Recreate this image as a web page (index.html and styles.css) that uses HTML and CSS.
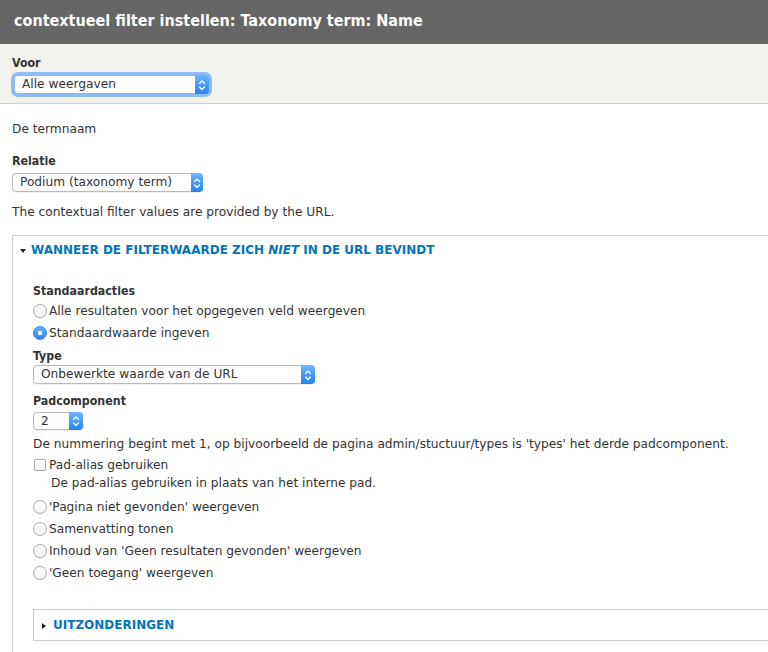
FILE: index.html
```html
<!DOCTYPE html>
<html lang="nl">
<head>
<meta charset="utf-8">
<title>contextueel filter instellen</title>
<link rel="stylesheet" href="styles.css">
</head>
<body>
<header class="dialog-title">
  <h1>contextueel filter instellen: Taxonomy term: Name</h1>
</header>

<div class="override">
  <div class="label">Voor</div>
  <div class="select select-focus w-voor">
    <span class="select-text">Alle weergaven</span>
    <span class="stepper"><svg width="14" height="18" viewBox="0 0 14 18"><path d="M4.5 7.5 L7 5 L9.5 7.5 M4.5 11 L7 13.5 L9.5 11" fill="none" stroke="#fff" stroke-width="1.3" stroke-linecap="round" stroke-linejoin="round"/></svg></span>
  </div>
</div>

<main class="content">
  <p class="desc-top">De termnaam</p>
  <div class="label lbl-relatie">Relatie</div>
  <div class="select w-relatie">
    <span class="select-text">Podium (taxonomy term)</span>
    <span class="stepper"><svg width="12" height="18" viewBox="0 0 12 18"><path d="M3.5 7.5 L6 5 L8.5 7.5 M3.5 11 L6 13.5 L8.5 11" fill="none" stroke="#fff" stroke-width="1.3" stroke-linecap="round" stroke-linejoin="round"/></svg></span>
  </div>
  <p class="note">The contextual filter values are provided by the URL.</p>

  <section class="fieldset">
    <div class="legend"><span class="tri-down"></span><span class="legend-text">WANNEER DE FILTERWAARDE ZICH <em>NIET</em> IN DE URL BEVINDT</span></div>
    <div class="fieldset-body">
      <div class="label">Standaardacties</div>
      <div class="radio-row"><span class="radio"></span><span>Alle resultaten voor het opgegeven veld weergeven</span></div>
      <div class="radio-row"><span class="radio radio-on"></span><span>Standaardwaarde ingeven</span></div>

      <div class="label lbl-type">Type</div>
      <div class="select w-type">
        <span class="select-text">Onbewerkte waarde van de URL</span>
        <span class="stepper"><svg width="14" height="18" viewBox="0 0 14 18"><path d="M4.5 7.5 L7 5 L9.5 7.5 M4.5 11 L7 13.5 L9.5 11" fill="none" stroke="#fff" stroke-width="1.3" stroke-linecap="round" stroke-linejoin="round"/></svg></span>
      </div>

      <div class="label lbl-pad">Padcomponent</div>
      <div class="select select-small w-pad">
        <span class="select-text">2</span>
        <span class="stepper"><svg width="14" height="18" viewBox="0 0 14 18"><path d="M4.5 7.5 L7 5 L9.5 7.5 M4.5 11 L7 13.5 L9.5 11" fill="none" stroke="#fff" stroke-width="1.3" stroke-linecap="round" stroke-linejoin="round"/></svg></span>
      </div>
      <p class="help">De nummering begint met 1, op bijvoorbeeld de pagina admin/stuctuur/types is 'types' het derde padcomponent.</p>

      <div class="check-row"><span class="checkbox"></span><span>Pad-alias gebruiken</span></div>
      <p class="help-indent">De pad-alias gebruiken in plaats van het interne pad.</p>

      <div class="radio-group">
        <div class="radio-row"><span class="radio"></span><span>'Pagina niet gevonden' weergeven</span></div>
        <div class="radio-row"><span class="radio"></span><span>Samenvatting tonen</span></div>
        <div class="radio-row"><span class="radio"></span><span>Inhoud van 'Geen resultaten gevonden' weergeven</span></div>
        <div class="radio-row"><span class="radio"></span><span>'Geen toegang' weergeven</span></div>
      </div>

      <section class="fieldset fieldset-inner">
        <div class="legend legend-closed"><span class="tri-right"></span><span class="legend-text">UITZONDERINGEN</span></div>
      </section>
    </div>
  </section>
</main>
</body>
</html>
```

FILE: styles.css
```css
html, body {
  margin: 0;
  padding: 0;
}

body {
  font-family: "DejaVu Sans", "Noto Sans", sans-serif;
  font-size: 12.2px;
  color: #333;
  background: #fff;
  overflow: hidden;
}

p {
  margin: 0;
}

.dialog-title {
  height: 44px;
  box-sizing: border-box;
  background: #666;
  padding: 11px 14px 0;
}

.dialog-title h1 {
  margin: 0;
  font-family: "DejaVu Sans Condensed", "DejaVu Sans", sans-serif;
  font-stretch: condensed;
  font-weight: bold;
  font-size: 16px;
  line-height: 20px;
  color: #fff;
}

.override {
  background: #f2f2ee;
  border-bottom: 1px solid #cfcfcf;
  padding: 9px 12px 9px;
}

.label {
  font-family: "DejaVu Sans Condensed", "DejaVu Sans", sans-serif;
  font-stretch: condensed;
  font-weight: bold;
  font-size: 12.3px;
  padding-top: 2px;
  line-height: 16px;
}

.override .label {
  padding-top: 3px;
  line-height: 15px;
}

.select {
  display: flex;
  align-items: stretch;
  height: 19px;
  box-sizing: border-box;
  margin-top: 4px;
  border: 1px solid #b9b9b9;
  border-radius: 4px;
  background: #fff;
  box-shadow: 0 1px 1px rgba(0, 0, 0, 0.06);
}

.select-focus {
  margin-left: 2px;
  box-shadow: 0 0 0 3px rgba(110, 168, 245, 0.75);
  border-color: #8fb6ea;
}

.select-text {
  flex: 1;
  padding-left: 7px;
  line-height: 17px;
  white-space: nowrap;
  overflow: hidden;
}

.stepper {
  width: 14px;
  margin: -1px -1px -1px 0;
  display: flex;
  align-items: center;
  justify-content: center;
  background: linear-gradient(#6fb5fb, #2581f3);
  border-radius: 0 4px 4px 0;
}

.w-voor { width: 195px; }
.w-relatie { width: 191px; }
.w-relatie .stepper { width: 12px; }
.w-type { width: 282px; }
.w-pad { width: 50px; }

.select-small {
  height: 18px;
  margin-top: 3px;
}
.select-small .select-text {
  line-height: 16px;
}

.content {
  padding: 16px 0 20px 12px;
}

.desc-top,
.note,
.help,
.help-indent {
  padding-top: 1px;
  line-height: 17px;
}

.lbl-relatie {
  margin-top: 13px;
}

.note {
  margin-top: 11px;
}

.fieldset {
  margin-top: 14px;
  border: 1px solid #ccc;
  border-right: 0;
  padding-top: 5px;
}

.legend {
  display: flex;
  align-items: center;
  padding-left: 7px;
  padding-top: 1px;
  height: 18px;
  box-sizing: border-box;
  font-family: "DejaVu Sans", sans-serif;
  font-weight: bold;
  font-size: 12px;
  color: #0074bd;
}

.legend-text {
  line-height: 17px;
  white-space: nowrap;
}

.legend em {
  font-style: italic;
}

.tri-down {
  width: 0;
  height: 0;
  border-left: 3.5px solid transparent;
  border-right: 3.5px solid transparent;
  border-top: 4px solid #222;
  margin-right: 5px;
  flex: none;
}

.tri-right {
  width: 0;
  height: 0;
  border-top: 3.5px solid transparent;
  border-bottom: 3.5px solid transparent;
  border-left: 4px solid #222;
  margin-right: 7px;
  flex: none;
}

.fieldset-body {
  padding: 22px 0 20px 20px;
}

.radio-row {
  display: flex;
  align-items: center;
  height: 22px;
  box-sizing: border-box;
  padding-top: 1px;
  white-space: nowrap;
}

.radio {
  width: 14px;
  height: 14px;
  box-sizing: border-box;
  border: 1px solid #a9a9a9;
  border-radius: 50%;
  background: linear-gradient(#fff, #f3f3f3);
  margin-right: 2px;
  flex: none;
}

.radio-on {
  border-color: #2f86ef;
  background: radial-gradient(circle, #fff 0, #fff 2px, transparent 2.5px), linear-gradient(#6ab2fb, #2a84f3);
}

.lbl-type {
  margin-top: 3px;
}

.w-type {
  margin-top: 1px;
}

.lbl-pad {
  margin-top: 7px;
}

.help {
  margin-top: 5px;
  white-space: nowrap;
}

.check-row {
  display: flex;
  align-items: center;
  height: 18px;
  box-sizing: border-box;
  padding-top: 1px;
  margin-top: 2px;
}

.checkbox {
  width: 12px;
  height: 12px;
  box-sizing: border-box;
  border: 1px solid #a5a5a5;
  border-radius: 2px;
  background: linear-gradient(#fff, #f2f2f2);
  margin: 0 3px 0 1px;
  flex: none;
}

.help-indent {
  margin-top: 1px;
  padding-left: 18px;
}

.radio-group {
  margin-top: 3px;
}

.fieldset-inner {
  margin-top: 26px;
  height: 32px;
  box-sizing: border-box;
  padding-top: 6px;
}

.legend-closed {
  padding-left: 8px;
}
```
